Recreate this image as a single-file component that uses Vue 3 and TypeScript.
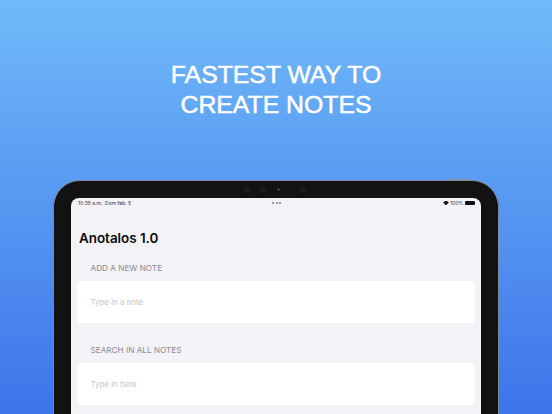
<script setup lang="ts">
interface Field { label: string; placeholder: string }
const fields: Field[] = [
  { label: 'ADD A NEW NOTE', placeholder: 'Type in a note' },
  { label: 'SEARCH IN ALL NOTES', placeholder: 'Type in here' },
]
</script>

<template>
  <main class="page">
    <h1 class="headline">FASTEST WAY TO<br />CREATE NOTES</h1>
    <div class="device">
      <span class="btn btn-top"></span>
      <span class="btn btn-side1"></span>
      <span class="btn btn-side2"></span>
      <div class="bezel-top">
        <i class="cam"></i><i class="cam"></i><i class="cam cam-small"></i><i class="cam cam-last"></i>
      </div>
      <div class="screen">
        <div class="status">
          <span class="time">10:35 a.m.&nbsp;&nbsp;Dom feb. 5</span>
          <span class="dots"><i></i><i></i><i></i></span>
          <span class="right">
            <svg class="wifi" viewBox="0 0 12 9" width="6" height="4.5">
              <path d="M6 8.8 L0.2 3 A8.2 8.2 0 0 1 11.8 3 Z" fill="#111" />
            </svg>
            <span>100%</span>
            <span class="battery"></span>
          </span>
        </div>
        <h2 class="title">Anotalos 1.0</h2>
        <section v-for="f in fields" :key="f.label" class="group">
          <div class="label">{{ f.label }}</div>
          <div class="input">{{ f.placeholder }}</div>
        </section>
      </div>
    </div>
  </main>
</template>

<style scoped>
.page {
  width: 552px;
  height: 414px;
  overflow: hidden;
  display: flex;
  flex-direction: column;
  align-items: center;
  background: linear-gradient(180deg, #70baf9 0%, #3d74ea 100%);
  font-family: Inter, "Liberation Sans", sans-serif;
}
.headline {
  margin: 60px 0 0;
  font-family: "Liberation Sans", Arial, sans-serif;
  font-weight: 400;
  font-size: 24.8px;
  line-height: 30px;
  color: #fff;
  text-align: center;
  -webkit-text-stroke: 0.5px #fff;
}
.device {
  position: relative;
  flex: none;
  margin-top: 60px;
  width: 446px;
  height: 300px;
  box-sizing: border-box;
  padding: 0 17px;
  background: #121212;
  border: 1px solid #7d8799;
  border-radius: 27px;
  display: flex;
  flex-direction: column;
}
.bezel-top {
  height: 17px;
  flex: none;
  display: flex;
  justify-content: center;
  align-items: center;
  transform: translateX(-1px);
}
.cam {
  width: 6px;
  height: 6px;
  border-radius: 50%;
  background: #1c1c1e;
  margin: 0 5px;
}
.cam-small {
  width: 3px;
  height: 3px;
  background: #3a3f46;
  margin: 0 7px 0 6px;
}
.cam-last { margin-left: 13px; }
.btn {
  position: absolute;
  background: #8a93a3;
}
.btn-top { top: -2px; right: 27px; width: 24px; height: 1px; }
.btn-side1 { right: -2px; top: 38px; width: 1px; height: 18px; }
.btn-side2 { right: -2px; top: 60px; width: 1px; height: 18px; }
.screen {
  flex: 1;
  background: #f2f2f7;
  border-radius: 8px 8px 0 0;
  padding: 0 6px;
  color: #000;
}
.status {
  height: 10px;
  margin: 0 -1px 0 1px;
  padding-right: 1px;
  display: flex;
  align-items: center;
  justify-content: space-between;
  font-size: 5px;
  color: #333;
}
.time, .right { flex: 1; white-space: nowrap; }
.right {
  display: flex;
  justify-content: flex-end;
  align-items: center;
  gap: 1.5px;
}
.dots { display: flex; gap: 1.5px; }
.dots i {
  width: 2px;
  height: 1.5px;
  background: #777;
  border-radius: 1px;
}
.battery {
  width: 10px;
  height: 4px;
  background: #111;
  border-radius: 1px;
}
.title {
  margin: 22px 0 16px 2px;
  font-size: 13.4px;
  line-height: 17px;
  font-weight: 600;
  color: #0a0a0a;
}
.group { margin-bottom: 22.5px; }
.label {
  margin: 0 0 7px 13.5px;
  font-size: 8.2px;
  line-height: 11px;
  color: #8a8a90;
}
.input {
  height: 41.5px;
  display: flex;
  align-items: center;
  padding-left: 13.5px;
  background: #fff;
  border-radius: 4px;
  font-size: 7.9px;
  color: #c6c6ca;
}
</style>
